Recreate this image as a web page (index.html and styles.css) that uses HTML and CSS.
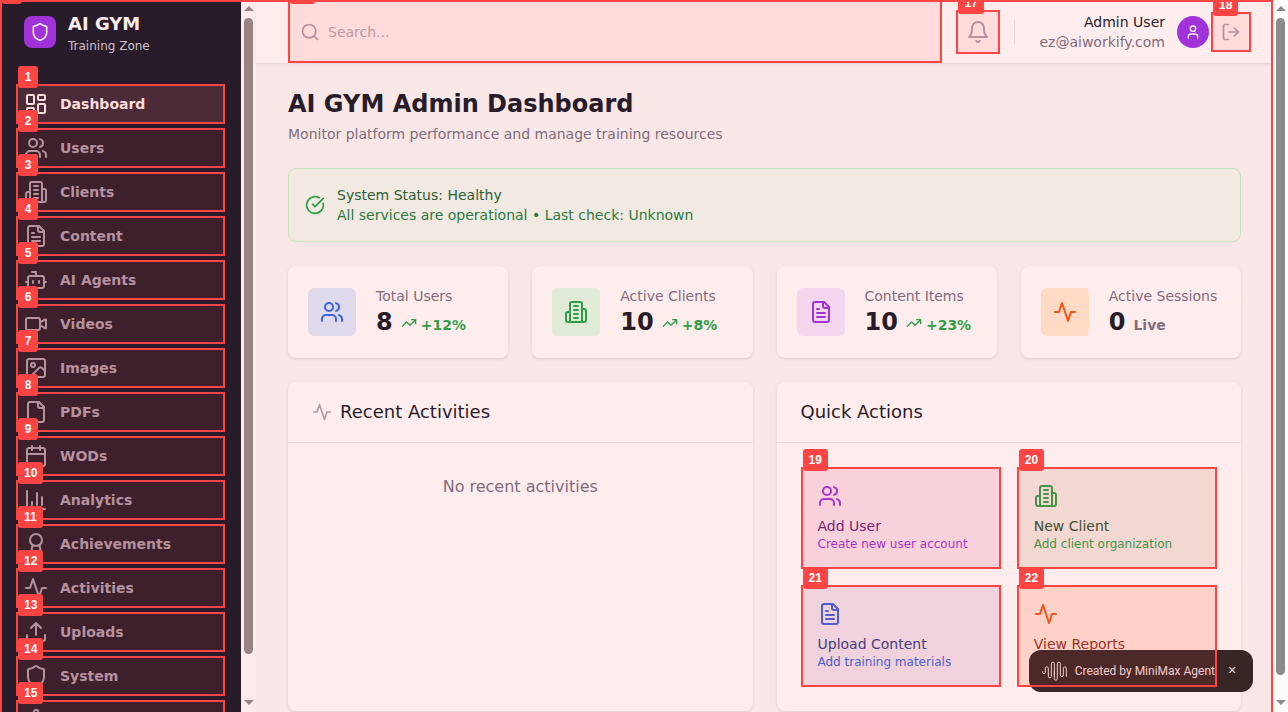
FILE: index.html
```html
<!DOCTYPE html>
<html lang="en">
<head>
<meta charset="utf-8">
<meta name="viewport" content="width=device-width, initial-scale=1">
<title>AI GYM Admin Dashboard</title>
<link rel="stylesheet" href="styles.css">
</head>
<body>
<svg class="sprite" aria-hidden="true">
  <symbol id="i-shield" viewBox="0 0 24 24"><path d="M20 13c0 5-3.5 7.5-7.66 8.95a1 1 0 0 1-.67-.01C7.5 20.5 4 18 4 13V6a1 1 0 0 1 1-1c2 0 4.500-1.200 6.240-2.720a1.170 1.170 0 0 1 1.520 0C14.510 3.810 17 5 19 5a1 1 0 0 1 1 1z"/></symbol>
  <symbol id="i-dashboard" viewBox="0 0 24 24"><rect width="7" height="9" x="3" y="3" rx="1"/><rect width="7" height="5" x="14" y="3" rx="1"/><rect width="7" height="9" x="14" y="12" rx="1"/><rect width="7" height="5" x="3" y="16" rx="1"/></symbol>
  <symbol id="i-users" viewBox="0 0 24 24"><path d="M16 21v-2a4 4 0 0 0-4-4H6a4 4 0 0 0-4 4v2"/><circle cx="9" cy="7" r="4"/><path d="M22 21v-2a4 4 0 0 0-3-3.870"/><path d="M16 3.130a4 4 0 0 1 0 7.750"/></symbol>
  <symbol id="i-building" viewBox="0 0 24 24"><path d="M6 22V4a2 2 0 0 1 2-2h8a2 2 0 0 1 2 2v18Z"/><path d="M6 12H4a2 2 0 0 0-2 2v6a2 2 0 0 0 2 2h2"/><path d="M18 9h2a2 2 0 0 1 2 2v9a2 2 0 0 1-2 2h-2"/><path d="M10 6h4M10 10h4M10 14h4M10 18h4"/></symbol>
  <symbol id="i-file-text" viewBox="0 0 24 24"><path d="M15 2H6a2 2 0 0 0-2 2v16a2 2 0 0 0 2 2h12a2 2 0 0 0 2-2V7Z"/><path d="M14 2v4a2 2 0 0 0 2 2h4"/><path d="M10 9H8M16 13H8M16 17H8"/></symbol>
  <symbol id="i-bot" viewBox="0 0 24 24"><path d="M12 8V4H8"/><rect width="16" height="12" x="4" y="8" rx="2"/><path d="M2 14h2M20 14h2M15 13v2M9 13v2"/></symbol>
  <symbol id="i-video" viewBox="0 0 24 24"><path d="m16 13 5.223 3.482a.5.5 0 0 0 .777-.416V7.870a.5.5 0 0 0-.752-.432L16 10.500"/><rect x="2" y="6" width="14" height="12" rx="2"/></symbol>
  <symbol id="i-image" viewBox="0 0 24 24"><rect width="18" height="18" x="3" y="3" rx="2"/><circle cx="9" cy="9" r="2"/><path d="m21 15-3.086-3.086a2 2 0 0 0-2.828 0L6 21"/></symbol>
  <symbol id="i-file" viewBox="0 0 24 24"><path d="M15 2H6a2 2 0 0 0-2 2v16a2 2 0 0 0 2 2h12a2 2 0 0 0 2-2V7Z"/><path d="M14 2v4a2 2 0 0 0 2 2h4"/></symbol>
  <symbol id="i-calendar" viewBox="0 0 24 24"><path d="M8 2v4M16 2v4M3 10h18"/><rect width="18" height="18" x="3" y="4" rx="2"/></symbol>
  <symbol id="i-chart" viewBox="0 0 24 24"><path d="M3 3v16a2 2 0 0 0 2 2h16M18 17V9M13 17V5M8 17v-3"/></symbol>
  <symbol id="i-award" viewBox="0 0 24 24"><path d="m15.477 12.890 1.515 8.526a.5.5 0 0 1-.81.470l-3.580-2.687a1 1 0 0 0-1.197 0l-3.586 2.686a.5.5 0 0 1-.81-.469l1.514-8.526"/><circle cx="12" cy="8" r="6"/></symbol>
  <symbol id="i-activity" viewBox="0 0 24 24"><path d="M22 12h-4l-3 9L9 3l-3 9H2"/></symbol>
  <symbol id="i-upload" viewBox="0 0 24 24"><path d="M21 15v4a2 2 0 0 1-2 2H5a2 2 0 0 1-2-2v-4M17 8l-5-5-5 5M12 3v12"/></symbol>
  <symbol id="i-settings" viewBox="0 0 24 24"><path d="M12.220 2h-.44a2 2 0 0 0-2 2v.18a2 2 0 0 1-1 1.730l-.43.250a2 2 0 0 1-2 0l-.15-.08a2 2 0 0 0-2.730.730l-.22.380a2 2 0 0 0 .73 2.730l.15.100a2 2 0 0 1 1 1.720v.51a2 2 0 0 1-1 1.740l-.15.090a2 2 0 0 0-.73 2.730l.22.380a2 2 0 0 0 2.730.730l.15-.08a2 2 0 0 1 2 0l.43.250a2 2 0 0 1 1 1.730V20a2 2 0 0 0 2 2h.44a2 2 0 0 0 2-2v-.18a2 2 0 0 1 1-1.730l.43-.25a2 2 0 0 1 2 0l.15.080a2 2 0 0 0 2.730-.73l.22-.39a2 2 0 0 0-.73-2.730l-.15-.08a2 2 0 0 1-1-1.740v-.5a2 2 0 0 1 1-1.740l.15-.09a2 2 0 0 0 .73-2.730l-.22-.38a2 2 0 0 0-2.730-.73l-.15.080a2 2 0 0 1-2 0l-.43-.25a2 2 0 0 1-1-1.730V4a2 2 0 0 0-2-2z"/><circle cx="12" cy="12" r="3"/></symbol>
  <symbol id="i-search" viewBox="0 0 24 24"><circle cx="11" cy="11" r="8"/><path d="m21 21-4.300-4.300"/></symbol>
  <symbol id="i-bell" viewBox="0 0 24 24"><path d="M6 8a6 6 0 0 1 12 0c0 7 3 9 3 9H3s3-2 3-9M10.300 21a1.940 1.940 0 0 0 3.400 0"/></symbol>
  <symbol id="i-user" viewBox="0 0 24 24"><path d="M19 21v-2a4 4 0 0 0-4-4H9a4 4 0 0 0-4 4v2"/><circle cx="12" cy="7" r="4"/></symbol>
  <symbol id="i-logout" viewBox="0 0 24 24"><path d="M9 21H5a2 2 0 0 1-2-2V5a2 2 0 0 1 2-2h4M16 17l5-5-5-5M21 12H9"/></symbol>
  <symbol id="i-check" viewBox="0 0 24 24"><path d="M21.801 10A10 10 0 1 1 17 3.335"/><path d="m9 11 3 3L22 4"/></symbol>
  <symbol id="i-trend" viewBox="0 0 24 24"><path d="m22 7-8.500 8.500-5-5L2 17M16 7h6v6"/></symbol>
</svg>

<div class="app">
  <aside class="sidebar">
    <div class="brand">
      <span class="brand-logo"><svg class="icon icon-20"><use href="#i-shield"/></svg></span>
      <div>
        <div class="brand-name">AI GYM</div>
        <div class="brand-sub">Training Zone</div>
      </div>
    </div>
    <nav class="nav">
      <a class="nav-item active" href="#dashboard"><svg class="icon"><use href="#i-dashboard"/></svg>Dashboard<span class="mark"><b class="badge">1</b></span></a>
      <a class="nav-item" href="#users"><svg class="icon"><use href="#i-users"/></svg>Users<span class="mark"><b class="badge">2</b></span></a>
      <a class="nav-item" href="#clients"><svg class="icon"><use href="#i-building"/></svg>Clients<span class="mark"><b class="badge">3</b></span></a>
      <a class="nav-item" href="#content"><svg class="icon"><use href="#i-file-text"/></svg>Content<span class="mark"><b class="badge">4</b></span></a>
      <a class="nav-item" href="#agents"><svg class="icon"><use href="#i-bot"/></svg>AI Agents<span class="mark"><b class="badge">5</b></span></a>
      <a class="nav-item" href="#videos"><svg class="icon"><use href="#i-video"/></svg>Videos<span class="mark"><b class="badge">6</b></span></a>
      <a class="nav-item" href="#images"><svg class="icon"><use href="#i-image"/></svg>Images<span class="mark"><b class="badge">7</b></span></a>
      <a class="nav-item" href="#pdfs"><svg class="icon"><use href="#i-file"/></svg>PDFs<span class="mark"><b class="badge">8</b></span></a>
      <a class="nav-item" href="#wods"><svg class="icon"><use href="#i-calendar"/></svg>WODs<span class="mark"><b class="badge">9</b></span></a>
      <a class="nav-item" href="#analytics"><svg class="icon"><use href="#i-chart"/></svg>Analytics<span class="mark"><b class="badge">10</b></span></a>
      <a class="nav-item" href="#achievements"><svg class="icon"><use href="#i-award"/></svg>Achievements<span class="mark"><b class="badge">11</b></span></a>
      <a class="nav-item" href="#activities"><svg class="icon"><use href="#i-activity"/></svg>Activities<span class="mark"><b class="badge">12</b></span></a>
      <a class="nav-item" href="#uploads"><svg class="icon"><use href="#i-upload"/></svg>Uploads<span class="mark"><b class="badge">13</b></span></a>
      <a class="nav-item" href="#system"><svg class="icon"><use href="#i-shield"/></svg>System<span class="mark"><b class="badge">14</b></span></a>
      <a class="nav-item" href="#settings" aria-label="Settings"><svg class="icon"><use href="#i-settings"/></svg><span class="mark"><b class="badge">15</b></span></a>
    </nav>
  </aside>
  <div class="scrollbar scrollbar-side" aria-hidden="true"><i class="arrow-up"></i><i class="thumb thumb-side"></i><i class="arrow-down"></i></div>

  <div class="main">
    <header class="topbar">
      <div class="search">
        <svg class="icon icon-20"><use href="#i-search"/></svg>
        <input class="search-input" type="search" placeholder="Search..." aria-label="Search">
        <span class="mark"><b class="badge">16</b></span>
      </div>
      <button class="icon-btn icon-btn-lg" type="button" aria-label="Notifications"><svg class="icon"><use href="#i-bell"/></svg><span class="mark"><b class="badge">17</b></span></button>
      <span class="divider"></span>
      <div class="account">
        <div class="account-text">
          <div class="account-name">Admin User</div>
          <div>ez@aiworkify.com</div>
        </div>
        <span class="avatar"><svg class="icon icon-16"><use href="#i-user"/></svg></span>
      </div>
      <button class="icon-btn" type="button" aria-label="Log out"><svg class="icon icon-20"><use href="#i-logout"/></svg><span class="mark"><b class="badge">18</b></span></button>
    </header>

    <main class="content">
      <div>
        <h1 class="title">AI GYM Admin Dashboard</h1>
        <p class="subtitle">Monitor platform performance and manage training resources</p>
      </div>

      <section class="status">
        <svg class="icon icon-20"><use href="#i-check"/></svg>
        <div>
          <div class="status-title">System Status: Healthy</div>
          <div>All services are operational • Last check: Unknown</div>
        </div>
      </section>

      <section class="stats">
        <article class="card stat">
          <span class="stat-icon blue"><svg class="icon"><use href="#i-users"/></svg></span>
          <div><div class="stat-label">Total Users</div><div class="stat-row"><span class="stat-value">8</span><span class="change"><svg class="icon icon-16"><use href="#i-trend"/></svg>+12%</span></div></div>
        </article>
        <article class="card stat">
          <span class="stat-icon green"><svg class="icon"><use href="#i-building"/></svg></span>
          <div><div class="stat-label">Active Clients</div><div class="stat-row"><span class="stat-value">10</span><span class="change"><svg class="icon icon-16"><use href="#i-trend"/></svg>+8%</span></div></div>
        </article>
        <article class="card stat">
          <span class="stat-icon purple"><svg class="icon"><use href="#i-file-text"/></svg></span>
          <div><div class="stat-label">Content Items</div><div class="stat-row"><span class="stat-value">10</span><span class="change"><svg class="icon icon-16"><use href="#i-trend"/></svg>+23%</span></div></div>
        </article>
        <article class="card stat">
          <span class="stat-icon orange"><svg class="icon"><use href="#i-activity"/></svg></span>
          <div><div class="stat-label">Active Sessions</div><div class="stat-row"><span class="stat-value">0</span><span class="change live">Live</span></div></div>
        </article>
      </section>

      <section class="panels">
        <article class="card">
          <h2 class="panel-head"><svg class="icon icon-20"><use href="#i-activity"/></svg>Recent Activities</h2>
          <p class="empty">No recent activities</p>
        </article>
        <article class="card">
          <h2 class="panel-head">Quick Actions</h2>
          <div class="actions">
            <button class="action action-purple" type="button"><svg class="icon"><use href="#i-users"/></svg><span class="action-title">Add User</span><span class="action-sub">Create new user account</span><span class="mark"><b class="badge">19</b></span></button>
            <button class="action action-green" type="button"><svg class="icon"><use href="#i-building"/></svg><span class="action-title">New Client</span><span class="action-sub">Add client organization</span><span class="mark"><b class="badge">20</b></span></button>
            <button class="action action-blue" type="button"><svg class="icon"><use href="#i-file-text"/></svg><span class="action-title">Upload Content</span><span class="action-sub">Add training materials</span><span class="mark"><b class="badge">21</b></span></button>
            <button class="action action-orange" type="button"><svg class="icon"><use href="#i-activity"/></svg><span class="action-title">View Reports</span><span class="mark"><b class="badge">22</b></span></button>
          </div>
        </article>
      </section>
    </main>
  </div>
  <span class="mark mark-root"><b class="badge">0</b></span>
</div>
<div class="scrollbar scrollbar-page" aria-hidden="true"><i class="arrow-up"></i><i class="thumb thumb-page"></i><i class="arrow-down"></i></div>

<div class="toast">
  <svg class="toast-logo" viewBox="0 0 78 60" aria-hidden="true"><path d="M5 32v2a4 4 0 0 0 8 0V22a4.500 4.500 0 0 1 9 0V46a4.500 4.500 0 0 0 9 0V8a4.500 4.500 0 0 1 9 0V42M40 30V53a4.500 4.500 0 0 0 9 0V8a4.500 4.500 0 0 1 9 0V42a4.500 4.500 0 0 0 9 0V22a4.500 4.500 0 0 1 9 0V46"/></svg>
  <span>Created by MiniMax Agent</span>
  <button class="toast-close" type="button" aria-label="Close">✕</button>
</div>
</body>
</html>
```
FILE: styles.css
```css
* { box-sizing: border-box; }

body {
  margin: 0;
  height: 100vh;
  display: flex;
  overflow: hidden;
  background: #f8e7e6;
  color: #281c2a;
  font: 14px/20px "DejaVu Sans", sans-serif;
}

h1, h2, p { margin: 0; font-weight: 400; }
button { font: inherit; color: inherit; border: 0; padding: 0; background: none; text-align: left; }
a { color: inherit; text-decoration: none; }

.sprite { position: absolute; width: 0; height: 0; }

.icon {
  width: 24px;
  height: 24px;
  flex: none;
  fill: none;
  stroke: currentColor;
  stroke-width: 2;
  stroke-linecap: round;
  stroke-linejoin: round;
}
.icon-20 { width: 20px; height: 20px; }
.icon-16 { width: 16px; height: 16px; }

/* Numbered highlight boxes */
.mark {
  position: absolute;
  inset: 0;
  z-index: 20;
  border: 2px solid #ff4444;
  background: rgba(255, 68, 68, .1);
  pointer-events: none;
}
.mark-root { background: none; border-bottom: 0; }
.badge {
  position: absolute;
  top: -20px;
  left: 0;
  min-width: 20px;
  padding: 4px 6px;
  border-radius: 3px;
  background: #ff4444;
  color: #fff;
  font: bold 12px/14px "Liberation Sans", sans-serif;
  text-align: center;
}

.app { position: relative; flex: 1; min-width: 0; display: flex; overflow: hidden; }

/* Sidebar */
.sidebar { width: 241px; flex: none; background: #281c2a; overflow: hidden; }
.brand { height: 64px; padding: 0 24px; display: flex; align-items: center; gap: 12px; }
.brand-logo {
  width: 32px;
  height: 32px;
  display: grid;
  place-items: center;
  border-radius: 8px;
  background: #9f33d9;
  color: #ffecec;
}
.brand-name { color: #ffecec; font-size: 18px; line-height: 28px; font-weight: 700; }
.brand-sub { color: #cfbfc7; font-size: 12px; line-height: 16px; }
.nav { padding: 20px 16px; display: flex; flex-direction: column; gap: 4px; }
.nav-item {
  position: relative;
  height: 40px;
  padding: 0 8px;
  display: flex;
  align-items: center;
  gap: 12px;
  color: #ad9ba9;
  font-weight: 700;
}
.nav-item.active { background: #372937; color: #ffecec; }

/* Scrollbars */
.scrollbar {
  width: 15px;
  flex: none;
  padding: 6px 3px 7px;
  display: flex;
  flex-direction: column;
  align-items: center;
  color: #988583;
  background: #fdeaea;
}
.scrollbar-page { color: #8b8b8b; background: #fcfcfc; }
.thumb { width: 9px; margin: 7px 0 auto; border-radius: 5px; background: currentColor; }
.thumb-side { height: 91%; }
.thumb-page { height: 94%; }
.arrow-up, .arrow-down { border: 5px solid transparent; border-top-width: 0; border-bottom: 5px solid currentColor; }
.arrow-down { border-bottom-width: 0; border-top: 5px solid currentColor; }

/* Top bar */
.main { flex: 1; min-width: 0; display: flex; flex-direction: column; }
.topbar {
  height: 64px;
  flex: none;
  padding: 0 22px 0 32px;
  display: flex;
  align-items: center;
  background: #ffecec;
  border-bottom: 1px solid #e9d6d9;
  box-shadow: 0 1px 2px rgba(80, 20, 30, .06);
}
.search {
  position: relative;
  flex: 1;
  align-self: stretch;
  padding: 0 12px;
  display: flex;
  align-items: center;
  gap: 8px;
  color: #ad9ba9;
}
.search-input {
  flex: 1;
  min-width: 0;
  padding: 0;
  border: 0;
  outline: 0;
  background: none;
  color: #281c2a;
  font: inherit;
}
.search-input::placeholder { color: #b7a3ad; opacity: 1; }
.icon-btn {
  position: relative;
  width: 40px;
  height: 40px;
  display: grid;
  place-items: center;
  color: #ad9ba9;
}
.icon-btn-lg { width: 44px; height: 44px; margin: 0 14px; }
.divider { width: 1px; height: 24px; background: #e9d6d9; }
.account { margin: 0 2px 0 24px; display: flex; align-items: center; gap: 12px; }
.account-text { text-align: right; color: #7f6d7c; }
.account-name { color: #281c2a; }
.avatar {
  width: 32px;
  height: 32px;
  display: grid;
  place-items: center;
  border-radius: 50%;
  background: #9f33d9;
  color: #ffecec;
}

/* Content */
.content { padding: 24px 32px; display: flex; flex-direction: column; gap: 24px; }
.title { font-size: 24px; line-height: 32px; font-weight: 700; }
.subtitle { margin-top: 4px; color: #7f6d7c; }

.status {
  padding: 16px;
  display: flex;
  align-items: center;
  gap: 12px;
  border: 1px solid #c1e5c1;
  border-radius: 8px;
  background: #f1e9e2;
  color: #2d7b40;
}
.status .icon { color: #2f9e4b; }
.status-title { color: #2d5f37; }

.card {
  min-width: 0;
  border-radius: 8px;
  background: #ffecec;
  box-shadow: 0 1px 3px rgba(80, 20, 30, .13);
}
.stats { display: grid; grid-template-columns: repeat(4, minmax(0, 1fr)); gap: 24px; }
.stat { padding: 20px; display: flex; align-items: center; gap: 20px; }
.stat-icon { width: 48px; height: 48px; flex: none; display: grid; place-items: center; border-radius: 6px; }
.blue { background: #dedaeb; color: #3c61dc; }
.green { background: #dfead7; color: #2f9e4b; }
.purple { background: #f4d7ee; color: #9f33d9; }
.orange { background: #ffdac4; color: #ee5817; }
.stat-label { color: #7f6d7c; white-space: nowrap; }
.stat-row { display: flex; align-items: baseline; gap: 8px; }
.stat-value { font-size: 24px; line-height: 32px; font-weight: 700; }
.change { display: flex; align-items: baseline; gap: 4px; color: #2f9e4b; font-weight: 700; }
.change .icon { align-self: flex-start; }
.live { color: #7f6d7c; }

.panels { display: grid; grid-template-columns: repeat(2, minmax(0, 1fr)); gap: 24px; }
.panel-head {
  padding: 16px 24px;
  display: flex;
  align-items: center;
  gap: 8px;
  border-bottom: 1px solid #e9d6d9;
  font-size: 18px;
  line-height: 28px;
}
.panel-head .icon { color: #ad9ba9; }
.empty { padding: 32px 24px; text-align: center; color: #7f6d7c; font-size: 16px; line-height: 24px; }

.actions { padding: 24px; display: grid; grid-template-columns: repeat(2, minmax(0, 1fr)); gap: 16px; }
.action {
  position: relative;
  min-height: 102px;
  padding: 17px;
  display: flex;
  flex-direction: column;
  align-items: flex-start;
  border-radius: 8px;
}
.action-title { margin-top: 8px; }
.action-sub { font-size: 12px; line-height: 16px; }
.action-purple { background: #f8e1ec; color: #9f33d9; }
.action-purple .action-title { color: #6b2279; }
.action-green { background: #f2e8e1; color: #2f9e4b; }
.action-green .action-title { color: #2a5030; }
.action-blue { background: #eee3ec; color: #3c61dc; }
.action-blue .action-title { color: #343b86; }
.action-orange { background: #ffe1d9; color: #ee5817; }
.action-orange .action-title { color: #943019; }

.toast {
  position: fixed;
  right: 35px;
  bottom: 20px;
  z-index: 10;
  height: 42px;
  padding: 0 16px 0 12px;
  display: flex;
  align-items: center;
  gap: 8px;
  border-radius: 12px;
  background: #382526;
  color: #f3dcdc;
  font: 12px/16px Roboto, sans-serif;
}
.toast-logo { width: 26px; height: 20px; fill: none; stroke: currentColor; stroke-width: 3; stroke-linecap: round; }
.toast-close { margin-left: 4px; width: 10px; text-align: center; font: 11px/16px "DejaVu Sans", sans-serif; }
```
